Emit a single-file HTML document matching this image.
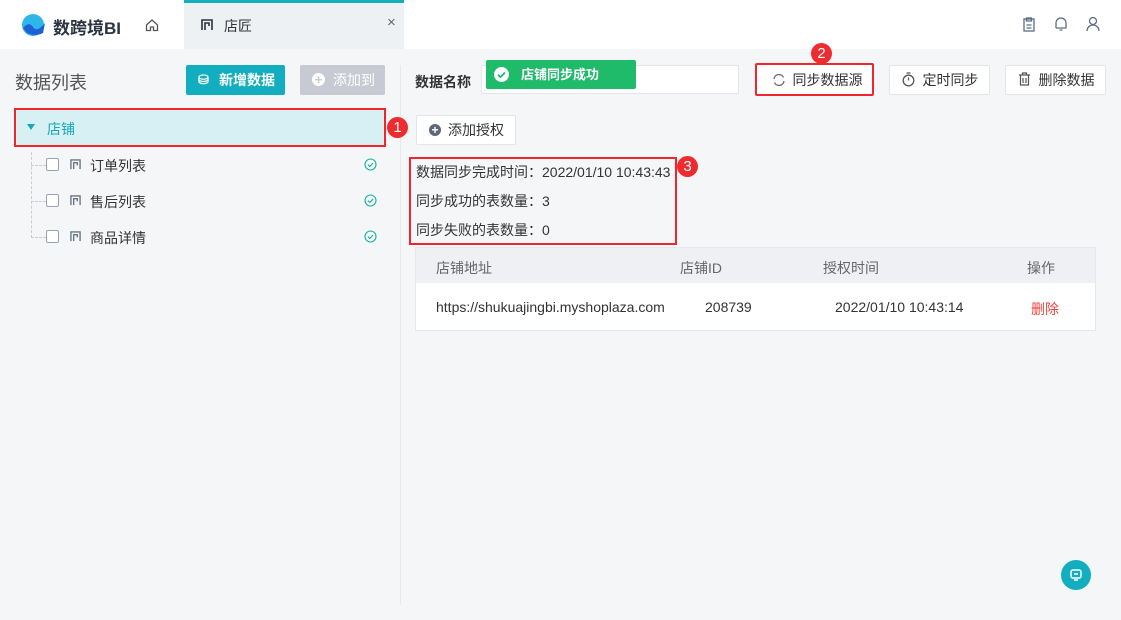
<!DOCTYPE html>
<html><head><meta charset="utf-8"><style>
*{box-sizing:border-box;margin:0;padding:0}
body{width:1121px;height:620px;background:#f5f6f8;font-family:"Liberation Sans","Noto Sans CJK SC",sans-serif;font-size:14px;color:#333;position:relative;overflow:hidden}
.a{position:absolute}
.btn{position:absolute;background:#fff;border:1px solid #e3e5e9;border-radius:2px;display:flex;align-items:center;justify-content:center;font-size:14px;color:#333}
.red{border:2px solid #f0262e}
.badge{position:absolute;width:21px;height:21px;border-radius:50%;background:#ee2b2f;color:#fff;font-size:15px;text-align:center;line-height:21px}
.cb{position:absolute;width:13px;height:13px;border:1px solid #9aa3b0;border-radius:2px;background:#fff}
</style></head><body>
<div class="a" style="left:0;top:0;width:1121px;height:49px;background:#fff"></div>
<svg class="a" style="left:21px;top:13px" width="26" height="24" viewBox="0 0 26 24"><circle cx="12" cy="12" r="11" fill="#2fb6e8"/><path d="M2 15 Q8 8 12 14 T24 10 L22 20 Q14 24 6 20Z" fill="#1f5fd6"/></svg>
<div class="a" style="left:53px;top:14px;font-size:17px;font-weight:bold;color:#2a3340">数跨境BI</div>
<svg class="a" style="left:145px;top:18px" width="14" height="14" viewBox="0 0 14 14"><path d="M1.5 7 L7 2 L12.5 7 V12.5 H8.5 V9 H5.5 V12.5 H1.5Z" fill="none" stroke="#555" stroke-width="1.3"/></svg>
<div class="a" style="left:184px;top:0;width:220px;height:49px;background:#eef1f4;border-top:3px solid #14b0c0"></div>
<svg class="a" style="left:201px;top:19px" width="12" height="12" viewBox="0 0 12 12"><path d="M1 11V1H11V11M4 11V4H8V7" fill="none" stroke="#2a3340" stroke-width="1.6"/></svg>
<div class="a" style="left:224px;top:16px;font-size:14px">店匠</div>
<div class="a" style="left:387px;top:14px;font-size:15px;color:#666">×</div>
<svg class="a" style="left:1022px;top:17px" width="14" height="15" viewBox="0 0 14 15"><rect x="2" y="2" width="10" height="12" fill="none" stroke="#5a6c88" stroke-width="1.3"/><path d="M4.5 1h5v3h-5zM4.5 8h5M4.5 11h5" stroke="#5a6c88" stroke-width="1.3" fill="none"/></svg>
<svg class="a" style="left:1054px;top:16px" width="14" height="16" viewBox="0 0 14 16"><path d="M2 12V7a5 5 0 0 1 10 0v5H2M5.5 14h3" fill="none" stroke="#5a6c88" stroke-width="1.3"/></svg>
<svg class="a" style="left:1086px;top:16px" width="14" height="16" viewBox="0 0 14 16"><circle cx="7" cy="5" r="3.5" fill="none" stroke="#5a6c88" stroke-width="1.3"/><path d="M1 15a6 6 0 0 1 12 0" fill="none" stroke="#5a6c88" stroke-width="1.3"/></svg>

<div class="a" style="left:15px;top:69px;font-size:18px;color:#555">数据列表</div>
<div class="a" style="left:186px;top:65px;width:99px;height:30px;background:#12aebf;border-radius:2px;color:#fff;font-size:14px;font-weight:bold;line-height:30px;padding-left:33px">新增数据</div>
<div class="a" style="left:198px;top:72px;color:#fff;font-size:13px;font-weight:bold">⛁</div>
<div class="a" style="left:300px;top:65px;width:85px;height:30px;background:#c8cad3;border-radius:2px;color:#fff;font-size:14px;line-height:30px;padding-left:33px">添加到</div>
<div class="a" style="left:312px;top:73px;width:13px;height:13px;border-radius:50%;background:#fff;color:#c8cad3;font-size:13px;line-height:13px;text-align:center;font-weight:bold">+</div>
<div class="a" style="left:400px;top:65px;width:1px;height:540px;background:#e6e8ec"></div>

<div class="a red" style="left:14px;top:108px;width:372px;height:39px;background:#d6f0f3"></div>
<div class="a" style="left:27px;top:124px;width:0;height:0;border-left:4px solid transparent;border-right:4px solid transparent;border-top:6px solid #14a9b8"></div>
<div class="a" style="left:47px;top:119px;color:#14a9b8;font-size:14px">店铺</div>
<div class="badge" style="left:387px;top:117px">1</div>
<div class="a" style="left:31px;top:152px;width:0;height:86px;border-left:1px dashed #ccc"></div>
<div class="a" style="left:31px;top:165px;width:15px;border-top:1px dashed #ccc"></div>
<div class="a" style="left:31px;top:201px;width:15px;border-top:1px dashed #ccc"></div>
<div class="a" style="left:31px;top:237px;width:15px;border-top:1px dashed #ccc"></div>
<div class="cb" style="left:46px;top:158px"></div><div class="cb" style="left:46px;top:194px"></div><div class="cb" style="left:46px;top:230px"></div>
<svg class="a" style="left:70px;top:159px" width="11" height="11" viewBox="0 0 12 12"><path d="M1 11V1H11V11M4 11V4H8V7" fill="none" stroke="#6a7585" stroke-width="1.5"/></svg>
<svg class="a" style="left:70px;top:195px" width="11" height="11" viewBox="0 0 12 12"><path d="M1 11V1H11V11M4 11V4H8V7" fill="none" stroke="#6a7585" stroke-width="1.5"/></svg>
<svg class="a" style="left:70px;top:231px" width="11" height="11" viewBox="0 0 12 12"><path d="M1 11V1H11V11M4 11V4H8V7" fill="none" stroke="#6a7585" stroke-width="1.5"/></svg>
<div class="a" style="left:90px;top:156px">订单列表</div>
<div class="a" style="left:90px;top:192px">售后列表</div>
<div class="a" style="left:90px;top:228px">商品详情</div>
<svg class="a" style="left:364px;top:158px" width="13" height="13" viewBox="0 0 13 13"><circle cx="6.5" cy="6.5" r="5.5" fill="none" stroke="#19b0a0" stroke-width="1.1"/><path d="M4 6.7l1.8 1.8 3.3-3.5" fill="none" stroke="#19b0a0" stroke-width="1.1"/></svg>
<svg class="a" style="left:364px;top:194px" width="13" height="13" viewBox="0 0 13 13"><circle cx="6.5" cy="6.5" r="5.5" fill="none" stroke="#19b0a0" stroke-width="1.1"/><path d="M4 6.7l1.8 1.8 3.3-3.5" fill="none" stroke="#19b0a0" stroke-width="1.1"/></svg>
<svg class="a" style="left:364px;top:230px" width="13" height="13" viewBox="0 0 13 13"><circle cx="6.5" cy="6.5" r="5.5" fill="none" stroke="#19b0a0" stroke-width="1.1"/><path d="M4 6.7l1.8 1.8 3.3-3.5" fill="none" stroke="#19b0a0" stroke-width="1.1"/></svg>

<div class="a" style="left:415px;top:72px;font-weight:bold;font-size:14px">数据名称</div>
<div class="a" style="left:481px;top:65px;width:258px;height:29px;background:#fff;border:1px solid #e3e5e9"></div>
<div class="a" style="left:486px;top:60px;width:150px;height:29px;background:#1fba6a;border-radius:2px;color:#fff;font-size:13px;font-weight:bold;line-height:29px;padding-left:35px">店铺同步成功</div>
<svg class="a" style="left:494px;top:67px" width="15" height="15" viewBox="0 0 15 15"><circle cx="7.5" cy="7.5" r="7.5" fill="#fff"/><path d="M4 7.7l2.4 2.4 4.6-4.6" fill="none" stroke="#1fba6a" stroke-width="1.8"/></svg>
<div class="btn red" style="left:755px;top:63px;width:119px;height:33px;padding-left:26px">同步数据源</div>
<svg class="a" style="left:772px;top:73px" width="14" height="14" viewBox="0 0 14 14"><path d="M2 6a5 5 0 0 1 9.5-1.5M12 8a5 5 0 0 1-9.5 1.5" fill="none" stroke="#666" stroke-width="1.3"/></svg>
<div class="badge" style="left:811px;top:43px">2</div>
<div class="btn" style="left:889px;top:65px;width:101px;height:30px;padding-left:22px">定时同步</div>
<svg class="a" style="left:902px;top:72px" width="13" height="15" viewBox="0 0 13 15"><circle cx="6.5" cy="8.5" r="5.3" fill="none" stroke="#555" stroke-width="1.3"/><path d="M4.5 1h4M6.5 5.5v3" stroke="#555" stroke-width="1.3"/></svg>
<div class="btn" style="left:1005px;top:65px;width:101px;height:30px;padding-left:22px">删除数据</div>
<svg class="a" style="left:1018px;top:72px" width="13" height="14" viewBox="0 0 13 14"><path d="M1 3h11M4.5 3V1h4v2M2.5 3v10h8V3M5 6v5M8 6v5" fill="none" stroke="#555" stroke-width="1.2"/></svg>

<div class="btn" style="left:416px;top:115px;width:100px;height:30px;padding-left:20px">添加授权</div>
<div class="a" style="left:429px;top:124px;width:12px;height:12px;border-radius:50%;background:#5d6777;color:#fff;font-size:12px;line-height:12px;text-align:center;font-weight:bold">+</div>

<div class="a red" style="left:409px;top:157px;width:268px;height:88px"></div>
<div class="badge" style="left:677px;top:156px">3</div>
<div class="a" style="left:416px;top:162px">数据同步完成时间：2022/01/10 10:43:43</div>
<div class="a" style="left:416px;top:191px">同步成功的表数量：3</div>
<div class="a" style="left:416px;top:220px">同步失败的表数量：0</div>

<div class="a" style="left:415px;top:247px;width:681px;height:84px;background:#fff;border:1px solid #e6e8ec"></div>
<div class="a" style="left:416px;top:248px;width:679px;height:35px;background:#eef0f3"></div>
<div class="a" style="left:436px;top:258px;color:#666">店铺地址</div>
<div class="a" style="left:680px;top:258px;color:#666">店铺ID</div>
<div class="a" style="left:823px;top:258px;color:#666">授权时间</div>
<div class="a" style="left:1027px;top:258px;color:#666">操作</div>
<div class="a" style="left:436px;top:299px">https://shukuajingbi.myshoplaza.com</div>
<div class="a" style="left:705px;top:299px">208739</div>
<div class="a" style="left:835px;top:299px">2022/01/10 10:43:14</div>
<div class="a" style="left:1031px;top:299px;color:#f0413c">删除</div>

<div class="a" style="left:1061px;top:560px;width:30px;height:30px;border-radius:50%;background:#12aebf"></div>
<svg class="a" style="left:1069px;top:568px" width="14" height="14" viewBox="0 0 14 14"><rect x="2" y="2" width="10" height="8" rx="2" fill="none" stroke="#fff" stroke-width="1.5"/><path d="M5 12h4M5 6h4" stroke="#fff" stroke-width="1.5"/></svg>
</body></html>
